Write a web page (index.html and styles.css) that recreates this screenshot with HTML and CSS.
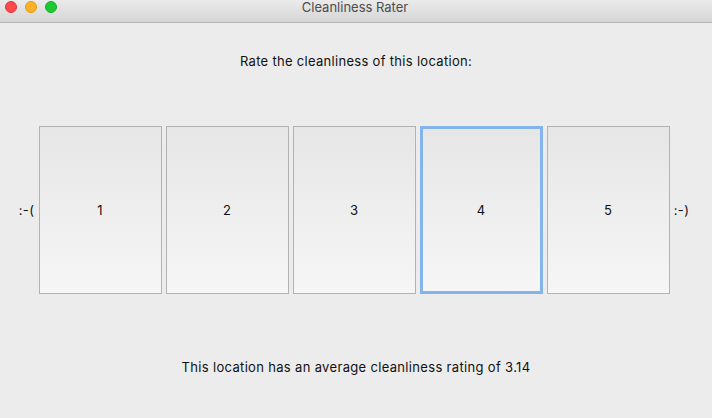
FILE: index.html
```html
<!DOCTYPE html>
<html>
<head>
<meta charset="utf-8">
<link rel="stylesheet" href="styles.css">
</head>
<body>
<div class="window">
  <div class="titlebar">
    <div class="lights">
      <span class="light red"></span>
      <span class="light yellow"></span>
      <span class="light green"></span>
    </div>
    <div class="title">Cleanliness Rater</div>
  </div>
  <div class="content">
    <p class="prompt">Rate the cleanliness of this location:</p>
    <div class="row">
      <span class="face">:-(</span>
      <button class="rate">1</button>
      <button class="rate">2</button>
      <button class="rate">3</button>
      <button class="rate focused">4</button>
      <button class="rate">5</button>
      <span class="face">:-)</span>
    </div>
    <p class="result">This location has an average cleanliness rating of 3.14</p>
  </div>
</div>
</body>
</html>
```
FILE: styles.css
```css
html, body {
  margin: 0;
  padding: 0;
  background: #ececec;
}
.window {
  width: 712px;
  height: 418px;
  font-family: Inter, "Liberation Sans", Arial, sans-serif;
  font-size: 13px;
  color: #111;
  display: flex;
  flex-direction: column;
}
.titlebar {
  height: 22px;
  border-bottom: 1px solid #b4b4b4;
  background: linear-gradient(#ebebeb, #d5d5d5);
  display: flex;
  align-items: flex-start;
  justify-content: center;
  position: relative;
}
.lights {
  position: absolute;
  left: 5px;
  top: 1px;
  display: flex;
  gap: 8px;
}
.light {
  width: 12px;
  height: 12px;
  border-radius: 50%;
  display: block;
  box-sizing: border-box;
}
.red { background: #fc4a4d; border: 0.5px solid #e2373b; }
.yellow { background: #fdb126; border: 0.5px solid #df9a1a; }
.green { background: #1dc933; border: 0.5px solid #14ae26; }
.title {
  color: #4d4d4d;
  font-size: 13px;
  line-height: 15px;
  padding-right: 2px;
}
.content {
  flex: 1;
  display: flex;
  flex-direction: column;
  align-items: center;
}
.prompt {
  margin: 30px 0 0;
  line-height: 16px;
  letter-spacing: 0.3px;
}
.row {
  margin-top: 57px;
  display: flex;
  align-items: center;
  gap: 4px;
  padding-right: 4px;
}
.face {
  width: 16px;
  text-align: center;
  line-height: 16px;
  letter-spacing: 0.3px;
}
.rate {
  width: 123px;
  height: 168px;
  box-sizing: border-box;
  border: 1px solid #b2b2b2;
  background: linear-gradient(#e6e6e6, #f6f6f6);
  font-family: Inter, "Liberation Sans", Arial, sans-serif;
  font-size: 13px;
  color: #111;
  padding: 0;
  margin: 0;
}
.rate.focused {
  border: 3px solid #84b4ec;
}
.result {
  margin: 65px 0 0;
  line-height: 16px;
  letter-spacing: 0.33px;
}
```
